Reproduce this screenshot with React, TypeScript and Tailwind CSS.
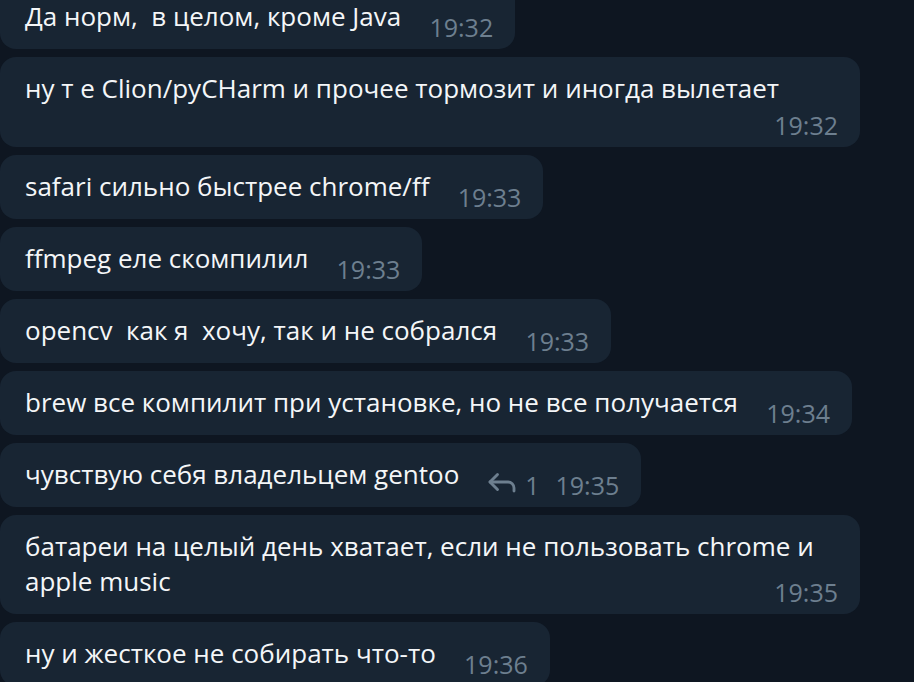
import { Reply } from "lucide-react";

type Msg = {
  text: string;
  time: string;
  replies?: number;
};

const messages: Msg[] = [
  { text: "Да норм,  в целом, кроме Java", time: "19:32" },
  { text: "ну т е Clion/pyCHarm и прочее тормозит и иногда вылетает", time: "19:32" },
  { text: "safari сильно быстрее chrome/ff", time: "19:33" },
  { text: "ffmpeg еле скомпилил", time: "19:33" },
  { text: "opencv  как я  хочу, так и не собрался", time: "19:33" },
  { text: "brew все компилит при установке, но не все получается", time: "19:34" },
  { text: "чувствую себя владельцем gentoo", time: "19:35", replies: 1 },
  { text: "батареи на целый день хватает, если не пользовать chrome и apple music", time: "19:35" },
  { text: "ну и жесткое не собирать что-то", time: "19:36" },
];

function Bubble({ msg }: { msg: Msg }) {
  return (
    <div className="relative w-fit max-w-[860px] rounded-[16px] bg-[#182533] pl-[25px] pr-[22px] pt-[14px] pb-[15px]">
      <p className="flow-root whitespace-pre-wrap text-[26px] leading-[35px] text-[#f4f6f8]">
        {msg.text}
        {/* место под время, чтобы текст на него не налезал */}
        <span className={msg.replies ? "float-right h-[26px] w-[160px]" : "float-right h-[26px] w-[92px]"} />
      </p>
      <div className="absolute bottom-[9px] right-[22px] flex items-center text-[25px] leading-[25px] text-[#6d7f8f]">
        {msg.replies ? (
          <>
            <Reply size={36} strokeWidth={1.9} className="-my-[6px] mr-[5px] -translate-y-[4px]" />
            <span className="mr-[16px]">{msg.replies}</span>
          </>
        ) : null}
        <span>{msg.time}</span>
      </div>
    </div>
  );
}

export default function App() {
  return (
    <main
      className="h-[682px] w-[914px] overflow-hidden bg-[#0e1621]"
      style={{ fontFamily: '"Open Sans", "Noto Sans", sans-serif' }}
    >
      <div className="-mt-[15px] flex flex-col gap-[8px]">
        {messages.map((m, i) => (
          <Bubble key={i} msg={m} />
        ))}
      </div>
    </main>
  );
}
